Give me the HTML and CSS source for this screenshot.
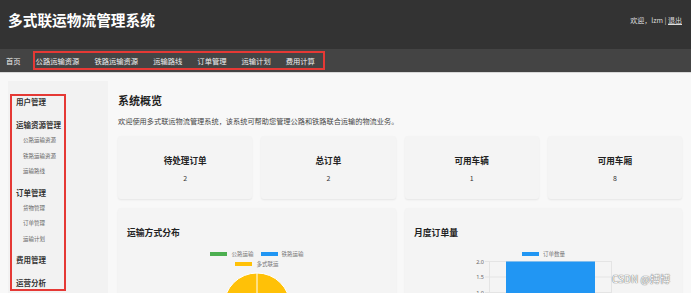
FILE: index.html
```html
<!DOCTYPE html>
<html>
<head>
<meta charset="utf-8">
<link rel="stylesheet" href="styles.css">
</head>
<body>

<header class="topBar">
	<h1 class="siteTitle">多式联运物流管理系统</h1>
	<div class="userInfo">欢迎，lzm | <a class="logoutLink" href="#">退出</a></div>
</header>

<nav class="mainNav">
	<a class="navLink" href="#">首页</a>
	<div class="navGroup">
		<a class="navLink" href="#">公路运输资源</a>
		<a class="navLink" href="#">铁路运输资源</a>
		<a class="navLink" href="#">运输路线</a>
		<a class="navLink" href="#">订单管理</a>
		<a class="navLink" href="#">运输计划</a>
		<a class="navLink" href="#">费用计算</a>
	</div>
</nav>

<div class="pageBody">

	<aside class="sideBar">
		<div class="sideMenu">
			<div class="menuGroup">
				<div class="menuTitle">用户管理</div>
			</div>
			<div class="menuGroup">
				<div class="menuTitle">运输资源管理</div>
				<ul class="subMenu">
					<li>公路运输资源</li>
					<li>铁路运输资源</li>
					<li>运输路线</li>
				</ul>
			</div>
			<div class="menuGroup">
				<div class="menuTitle">订单管理</div>
				<ul class="subMenu">
					<li>货物管理</li>
					<li>订单管理</li>
					<li>运输计划</li>
				</ul>
			</div>
			<div class="menuGroup">
				<div class="menuTitle">费用管理</div>
			</div>
			<div class="menuGroup">
				<div class="menuTitle">运营分析</div>
			</div>
		</div>
	</aside>

	<main class="content">
		<h2 class="sectionTitle">系统概览</h2>
		<p class="intro">欢迎使用多式联运物流管理系统，该系统可帮助您管理公路和铁路联合运输的物流业务。</p>

		<div class="statGrid">
			<div class="statCard">
				<div class="statLabel">待处理订单</div>
				<div class="statValue">2</div>
			</div>
			<div class="statCard">
				<div class="statLabel">总订单</div>
				<div class="statValue">2</div>
			</div>
			<div class="statCard">
				<div class="statLabel">可用车辆</div>
				<div class="statValue">1</div>
			</div>
			<div class="statCard">
				<div class="statLabel">可用车厢</div>
				<div class="statValue">8</div>
			</div>
		</div>

		<div class="chartGrid">
			<div class="chartCard">
				<h3 class="chartTitle">运输方式分布</h3>
				<div class="legendRow">
					<span class="legendItem"><span class="legendBox boxGreen"></span>公路运输</span>
					<span class="legendItem"><span class="legendBox boxBlue"></span>铁路运输</span>
				</div>
				<div class="legendRow">
					<span class="legendItem"><span class="legendBox boxYellow"></span>多式联运</span>
				</div>
				<svg class="pieChart" width="260" height="80" viewBox="0 0 260 80">
					<circle cx="130" cy="38" r="33" fill="#ffc107" stroke="#fff" stroke-width="1"/>
					<line x1="130" y1="38" x2="130" y2="5" stroke="#fff" stroke-width="1"/>
				</svg>
			</div>
			<div class="chartCard">
				<h3 class="chartTitle">月度订单量</h3>
				<div class="legendRow legendSingle">
					<span class="legendItem"><span class="legendBox boxBlue"></span>订单数量</span>
				</div>
				<svg class="barChart" width="259" height="40" viewBox="0 0 259 40">
					<g stroke="#e4e4e4" stroke-width="1">
						<line x1="71" y1="3.5" x2="198" y2="3.5"/>
						<line x1="71" y1="19" x2="198" y2="19"/>
						<line x1="71" y1="34.5" x2="198" y2="34.5"/>
						<line x1="75.5" y1="3" x2="75.5" y2="40"/>
						<line x1="197.5" y1="3" x2="197.5" y2="40"/>
					</g>
					<rect x="92" y="3.5" width="89" height="40" fill="#2196f3"/>
					<g class="axisLabel" text-anchor="end">
						<text x="70" y="5.5">2.0</text>
						<text x="70" y="21">1.5</text>
						<text x="70" y="36.5">1.0</text>
					</g>
				</svg>
			</div>
		</div>
	</main>

</div>

<div class="watermark">CSDN @搏博</div>

</body>
</html>
```

FILE: styles.css
```css
body {
	margin: 0;
	background: #f8f8f8;
	font-family: "Noto Sans CJK SC", "Noto Sans", sans-serif;
	color: #333;
	overflow: hidden;
}

.topBar {
	height: 49px;
	box-sizing: border-box;
	padding: 10px 9px 0 8px;
	background: #333333;
	display: flex;
	justify-content: space-between;
	align-items: flex-start;
}

.siteTitle {
	margin: 0;
	font-size: 14.7px;
	line-height: 20px;
	font-weight: bold;
	color: #ffffff;
}

.userInfo {
	font-size: 7px;
	line-height: 20px;
	color: #dddddd;
}

.logoutLink {
	color: #dddddd;
}

.mainNav {
	height: 23px;
	background: #444444;
	border-bottom: 1px solid #d8d8d8;
	display: flex;
	align-items: center;
	gap: 12px;
	padding-left: 6px;
}

.navLink {
	font-size: 7.3px;
	color: #eeeeee;
	text-decoration: none;
	line-height: 10px;
}

.navGroup {
	display: flex;
	align-items: center;
	gap: 15px;
	height: 15px;
	padding: 0 8px 0 1px;
	border: 2px solid #e53935;
}

.pageBody {
	display: flex;
	padding: 8px 9px 0 8px;
}

.sideBar {
	width: 100px;
	min-height: 260px;
	background: #f2f2f2;
	box-sizing: border-box;
	padding: 13px 0 0 2px;
}

.sideMenu {
	width: 56px;
	box-sizing: border-box;
	border: 2px solid #e53935;
	padding-left: 4px;
}

.menuGroup {
	margin-bottom: 7px;
}

.menuGroup:last-child {
	margin-bottom: 0;
}

.menuTitle {
	font-size: 7.5px;
	line-height: 12px;
	font-weight: bold;
	color: #333;
	padding-bottom: 4px;
	white-space: nowrap;
}

.menuGroup:last-child .menuTitle {
	padding-bottom: 0;
}

.subMenu {
	list-style: none;
	margin: -2px 0 0 0;
	padding: 0 0 0 7px;
}

.subMenu li {
	font-size: 5.5px;
	line-height: 15.5px;
	color: #666;
	white-space: nowrap;
}

.content {
	flex: 1;
	margin-left: 10px;
}

.sectionTitle {
	margin: 12px 0 0 0;
	font-size: 11px;
	line-height: 14px;
	font-weight: bold;
	color: #222;
}

.intro {
	margin: 9px 0 0 0;
	font-size: 7.2px;
	line-height: 10px;
	color: #444;
	white-space: nowrap;
}

.statGrid {
	display: grid;
	grid-template-columns: repeat(4, 1fr);
	gap: 9px;
	margin-top: 10px;
}

.statCard {
	background: #f4f4f4;
	border-radius: 3px;
	box-shadow: 0 1px 2px rgba(0, 0, 0, 0.08);
	padding: 18px 0 16px 0;
	text-align: center;
}

.statLabel {
	font-size: 8.6px;
	line-height: 12px;
	font-weight: bold;
	color: #222;
}

.statValue {
	margin-top: 7px;
	font-size: 7px;
	line-height: 10px;
	color: #333;
}

.chartGrid {
	display: grid;
	grid-template-columns: 1fr 1fr;
	gap: 9px;
	margin-top: 9px;
}

.chartCard {
	background: #f4f4f4;
	border-radius: 3px;
	box-shadow: 0 1px 2px rgba(0, 0, 0, 0.08);
	padding: 19px 9px 0 9px;
	height: 200px;
}

.chartTitle {
	margin: 0;
	font-size: 8.8px;
	line-height: 12px;
	font-weight: bold;
	color: #222;
}

.legendRow {
	display: flex;
	justify-content: center;
	gap: 7px;
	height: 8px;
	margin-top: 2px;
}

.legendRow:nth-of-type(1),
.legendSingle {
	margin-top: 11px;
}

.legendItem {
	display: flex;
	align-items: center;
	font-size: 5.5px;
	line-height: 8px;
	color: #777;
}

.legendBox {
	width: 17px;
	height: 4px;
	margin-right: 4px;
}

.boxGreen {
	background: #4caf50;
}

.boxBlue {
	background: #2196f3;
}

.boxYellow {
	background: #ffc107;
}

.pieChart,
.barChart {
	display: block;
}

.axisLabel {
	font-size: 5.5px;
	fill: #666;
	font-family: "Noto Sans", sans-serif;
}

.watermark {
	position: absolute;
	left: 612px;
	top: 271px;
	font-size: 10px;
	line-height: 16px;
	color: #ffffff;
	text-shadow: 0 0 1px #666, 0 0 1px #666;
	font-family: "Noto Sans CJK SC", sans-serif;
}
```
